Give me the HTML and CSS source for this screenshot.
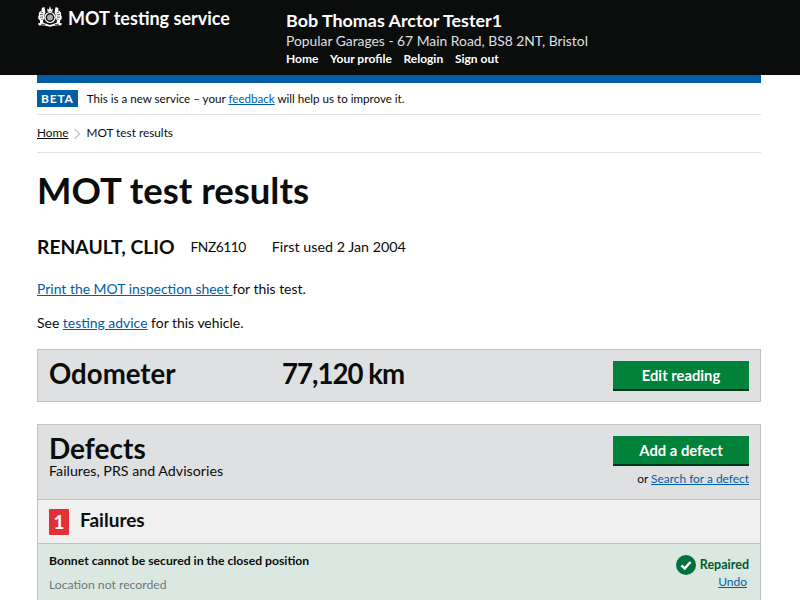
FILE: index.html
```html
<!DOCTYPE html>
<html lang="en">
<head>
<meta charset="utf-8">
<title>MOT test results</title>
<link rel="stylesheet" href="styles.css">
</head>
<body>
<header class="site-header">
  <div class="brand">
    <svg class="crest" viewBox="0 0 26 22" aria-hidden="true">
      <circle cx="13" cy="12.5" r="5" fill="none" stroke="#fff" stroke-width="1.2"/>
      <circle cx="13" cy="12.5" r="3" fill="#aaa"/>
      <path d="M10.6 6.8 L10.2 3.4 L11.8 4.8 L13 1 L14.2 4.8 L15.8 3.4 L15.4 6.8Z" fill="#fff"/>
      <path d="M7.6 2.4 C5.4 1.6 4 3.6 4.8 5.4 C2.8 6 1.2 8 2 10 C0.6 12 1 14.6 3 15.4 L3 18 L6.4 18 L6 15 L7.6 13.4 L7.4 10 L8.4 7.4 Z" fill="#fff"/>
      <path d="M18.4 2.4 C20.6 1.6 22 3.6 21.2 5.4 C23.2 6 24.8 8 24 10 C25.4 12 25 14.6 23 15.4 L23 18 L19.6 18 L20 15 L18.4 13.4 L18.6 10 L17.6 7.4 Z" fill="#fff"/>
      <path d="M1 18.4 C5 17 9 18.6 13 20 C17 18.6 21 17 25 18.4 L24 20.6 C20 19.6 17 20.6 13 21.8 C9 20.6 6 19.6 2 20.6Z" fill="#fff"/>
      <path d="M4 6.8 L6.4 8 M3 9.6 L6.2 9.8 M3 12.2 L6 12 M4.4 15 L5.6 13.6 M22 6.8 L19.6 8 M23 9.6 L19.8 9.8 M23 12.2 L20 12 M21.6 15 L20.4 13.6 M4 19.2 L8 19.6 M22 19.2 L18 19.6" stroke="#0b0c0c" stroke-width=".7"/>
    </svg>
    <span class="brand-name">MOT testing service</span>
  </div>
  <div class="user">
    <div class="user-name">Bob Thomas Arctor Tester1</div>
    <div class="user-site">Popular Garages - 67 Main Road, BS8 2NT, Bristol</div>
    <nav class="user-nav"><a>Home</a><a>Your profile</a><a>Relogin</a><a>Sign out</a></nav>
  </div>
</header>
<div class="page">
  <div class="blue-bar"></div>
  <p class="beta"><strong class="beta-tag">BETA</strong><span>This is a new service – your <a class="link" href="#">feedback</a> will help us to improve it.</span></p>
  <nav class="crumbs"><a href="#">Home</a><svg class="crumb-sep" viewBox="0 0 8 12" aria-hidden="true"><path d="M1.5 1 L6.5 6 L1.5 11" fill="none" stroke="#bfc1c3" stroke-width="1.2"/></svg><span>MOT test results</span></nav>
  <h1>MOT test results</h1>
  <div class="vehicle"><strong>RENAULT, CLIO</strong><span class="reg">FNZ6110</span><span>First used 2 Jan 2004</span></div>
  <p class="para first"><a class="link" href="#">Print the MOT inspection sheet </a>for this test.</p>
  <p class="para second">See <a class="link" href="#">testing advice</a> for this vehicle.</p>
  <section class="odometer">
    <h2>Odometer</h2>
    <div class="reading">77,120 km</div>
    <a class="btn">Edit reading</a>
  </section>
  <section class="defects">
    <div class="defects-head">
      <div>
        <h2>Defects</h2>
        <p class="defects-sub">Failures, PRS and Advisories</p>
      </div>
      <div class="defects-actions">
        <a class="btn">Add a defect</a>
        <p class="or">or <a class="link" href="#">Search for a defect</a></p>
      </div>
    </div>
    <div class="failures-head"><span class="count">1</span><h3>Failures</h3></div>
    <div class="defect-row">
      <div>
        <p class="defect-title">Bonnet cannot be secured in the closed position</p>
        <p class="defect-loc">Location not recorded</p>
      </div>
      <div class="defect-status">
        <div class="repaired">
          <svg class="tick" viewBox="0 0 20 20" aria-hidden="true"><circle cx="10" cy="10" r="10" fill="#00703c"/><path d="M5.5 10.5 L8.7 13.5 L14.5 7" fill="none" stroke="#fff" stroke-width="2.6"/></svg>
          <span class="repaired-text">Repaired</span>
        </div>
        <a class="link undo" href="#">Undo</a>
      </div>
    </div>
  </section>
</div>
</body>
</html>
```

FILE: styles.css
```css
* { box-sizing: border-box; }
html, body { margin: 0; padding: 0; }
body { height: 600px; overflow: hidden; background: #fff; color: #0b0c0c; font-family: Lato, "Liberation Sans", sans-serif; }
p, h1, h2, h3 { margin: 0; }
.link { color: #005ea5; text-decoration: underline; }

.site-header { height: 75px; background: #0b0c0c; color: #fff; display: flex; padding-left: 37px; }
.brand { width: 249px; display: flex; align-items: flex-start; padding-top: 5px; }
.crest { width: 26px; height: 22px; margin-right: 5px; }
.brand-name { font-size: 18px; font-weight: 700; line-height: 26px; }
.user { padding-top: 8px; }
.user-name { font-size: 17.9px; font-weight: 700; line-height: 24px; }
.user-site { font-size: 13.85px; line-height: 18px; color: #dee0e2; }
.user-nav { display: flex; gap: 11.7px; font-size: 12px; font-weight: 700; line-height: 16px; margin-top: 1px; }

.page { margin: 0 39px 0 37px; }
.blue-bar { height: 8px; background: #005ea5; }
.beta { height: 32px; padding-bottom: 1px; display: flex; align-items: center; gap: 9px; font-size: 11.6px; border-bottom: 1px solid #dee0e2; }
.beta-tag { background: #005ea5; color: #fff; font-size: 12px; line-height: 17px; padding: 0 4px; letter-spacing: 0.8px; }
.crumbs { height: 38px; padding-bottom: 2px; display: flex; align-items: center; font-size: 11.8px; border-bottom: 1px solid #dee0e2; }
.crumbs a { color: #0b0c0c; text-decoration: underline; }
.crumb-sep { width: 8px; height: 12px; margin: 2px 5px 0 5px; }
h1 { font-size: 36.5px; font-weight: 700; line-height: 44px; margin-top: 15px; }
.vehicle { display: flex; align-items: center; gap: 26px; font-size: 14.3px; line-height: 24px; margin-top: 23px; }
.vehicle strong { font-size: 19.3px; margin-right: -10px; }
.reg { font-size: 13.8px; letter-spacing: -0.5px; }
.para { font-size: 13.95px; line-height: 20px; }
.para.first { margin-top: 20px; }
.para.second { margin-top: 14px; }

.odometer { height: 53px; margin-top: 16px; background: #dee0e2; border: 1px solid #bfc1c3; display: flex; align-items: flex-start; padding: 8px 11px 0; }
.odometer h2, .reading { font-size: 27.6px; font-weight: 700; line-height: 32px; }
.odometer h2 { width: 233px; }
.reading { letter-spacing: -1px; }
.odometer .btn { margin-top: 3px; }
.btn { margin-left: auto; width: 136px; height: 28px; background: #00823b; color: #fff; font-size: 14.8px; font-weight: 700; display: flex; align-items: center; justify-content: center; box-shadow: 0 2px 0 #003618; }
.defects { margin-top: 22px; border: 1px solid #bfc1c3; border-bottom: 0; }
.defects-head { height: 75px; background: #dee0e2; border-bottom: 1px solid #bfc1c3; display: flex; justify-content: space-between; padding: 9px 11px 0; }
.defects-head h2 { font-size: 28px; font-weight: 700; line-height: 28px; }
.defects-sub { font-size: 14.25px; line-height: 18px; }
.defects-actions { text-align: right; padding-top: 2px; }
.defects-actions .btn { margin-bottom: 7px; }
.or { font-size: 11.9px; line-height: 16px; }
.failures-head { height: 44px; background: #f0f0f0; border-bottom: 1px solid #bfc1c3; display: flex; align-items: center; gap: 11px; padding-left: 11px; }
.count { width: 20px; height: 26px; background: #e52f36; color: #fff; font-size: 19px; font-weight: 700; display: flex; align-items: center; justify-content: center; border-radius: 1px; }
.failures-head h3 { font-size: 19px; font-weight: 700; line-height: 24px; margin-top: -4px; }
.defect-row { height: 80px; background: #dae8e1; display: flex; justify-content: space-between; padding: 8px 11px; }
.defect-title { font-size: 12.2px; font-weight: 700; line-height: 18px; }
.defect-loc { font-size: 12.2px; line-height: 18px; color: #6f777b; margin-top: 6px; }
.defect-status { text-align: right; font-size: 12px; padding-top: 3px; }
.repaired { display: flex; align-items: center; gap: 4px; font-weight: 700; color: #005a30; font-size: 12.5px; }
.repaired-text { margin-top: -2px; }
.tick { width: 20px; height: 20px; }
.undo { display: block; margin: -2px 2px 0 0; line-height: 18px; }
```
